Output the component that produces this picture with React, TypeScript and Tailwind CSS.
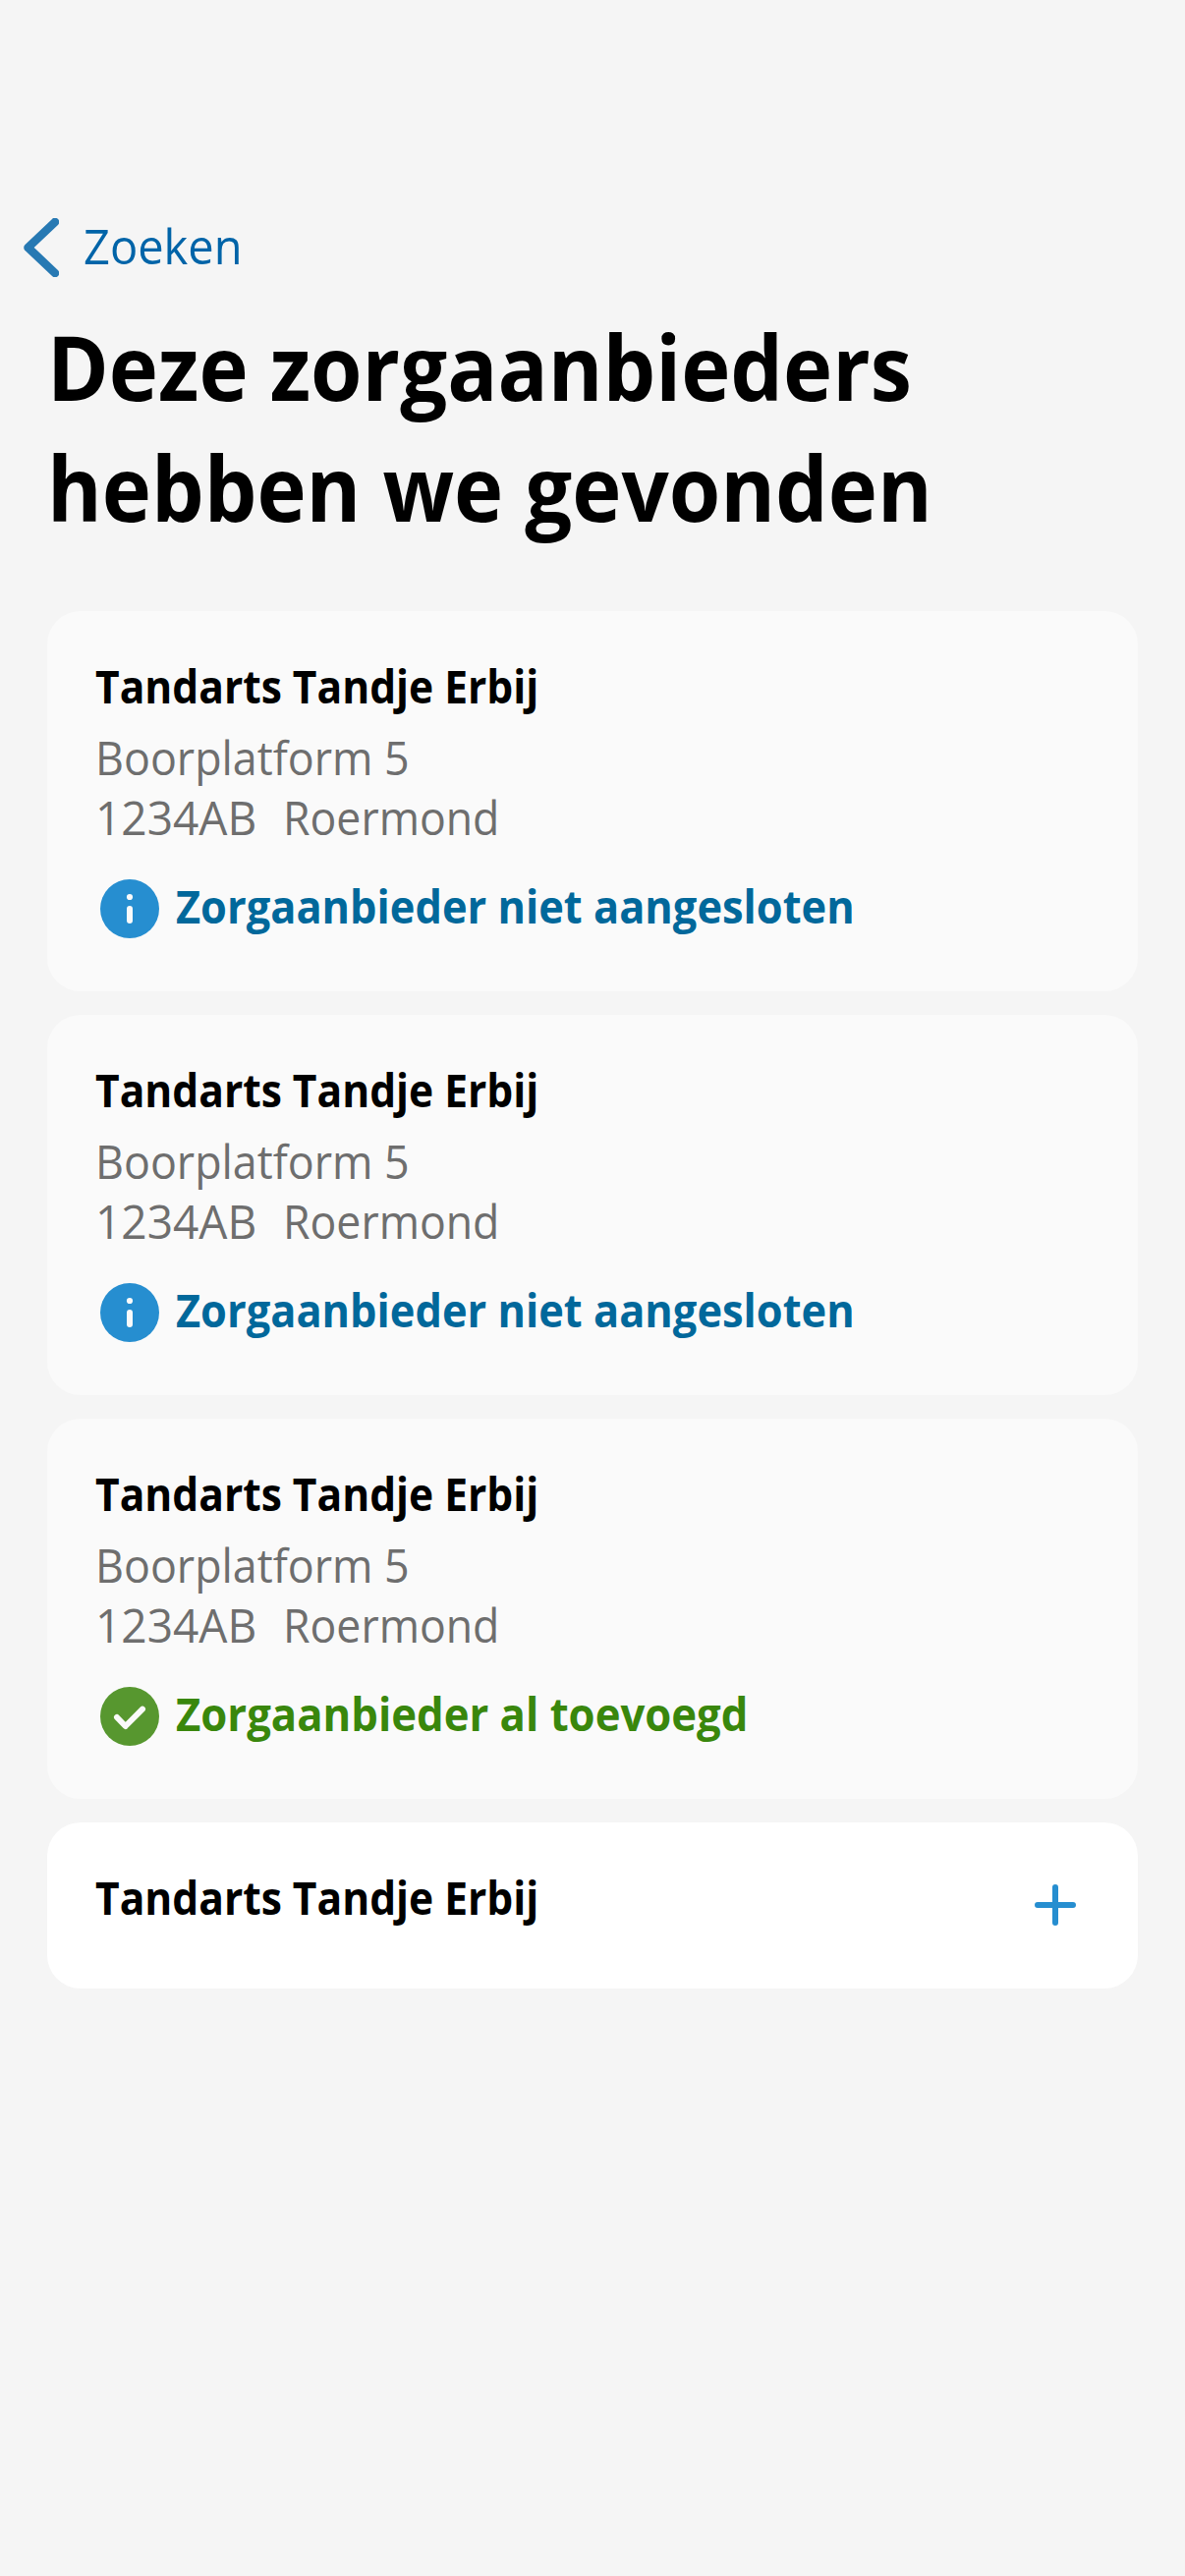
type Status = "unavailable" | "added";

const InfoIcon = () => (
  <svg viewBox="0 0 60 60" className="size-[60px] shrink-0">
    <circle cx="30" cy="30" r="30" fill="#268ed0" />
    <circle cx="30" cy="18" r="3.1" fill="#fafafa" />
    <rect x="27" y="27" width="6" height="18" rx="3" fill="#fafafa" />
  </svg>
);

const CheckIcon = () => (
  <svg viewBox="0 0 60 60" className="size-[60px] shrink-0">
    <circle cx="30" cy="30" r="30" fill="#57972f" />
    <path d="M17 31 L25.7 40 L43 22.7" fill="none" stroke="#fafafa" strokeWidth="6" strokeLinecap="round" strokeLinejoin="round" />
  </svg>
);

const Name = () => (
  <h2 className="w-max origin-left scale-x-[0.905] text-[47px] leading-[60px] font-bold text-black">
    Tandarts Tandje Erbij
  </h2>
);

function ProviderCard({ status }: { status: Status }) {
  return (
    <article className="h-[387px] rounded-[34px] bg-[#fafafa] pt-[46px] pl-[49px]">
      <Name />
      <div className="mt-[13px] text-[47px] leading-[61px] text-[#6e6e6e]">
        <p className="w-max origin-left scale-x-[0.953]">Boorplatform 5</p>
        <p className="flex gap-[23px]">
          <span className="origin-left scale-x-[0.98]">1234AB</span>
          <span className="origin-left scale-x-[0.949]">Roermond</span>
        </p>
      </div>
      <div className="mt-8 ml-[5px] flex items-center gap-[17px]">
        {status === "unavailable" ? <InfoIcon /> : <CheckIcon />}
        {status === "unavailable" ? (
          <p className="-mt-1.5 origin-left scale-x-[0.923] text-[47px] leading-[54px] font-bold whitespace-nowrap text-[#01689b]">
            Zorgaanbieder niet aangesloten
          </p>
        ) : (
          <p className="-mt-1.5 origin-left scale-x-[0.929] text-[47px] leading-[54px] font-bold whitespace-nowrap text-[#39870c]">
            Zorgaanbieder al toevoegd
          </p>
        )}
      </div>
    </article>
  );
}

export default function App() {
  return (
    <main className="min-h-[2622px] w-[1206px] bg-[#f5f5f5] pt-[200px] font-['Open_Sans',sans-serif]">
      <nav className="flex h-[100px] items-center pl-6">
        <svg viewBox="0 0 36 60" className="mt-1 h-[60px] w-9" fill="none">
          <path d="M32 4 L4.5 30 L32 56" stroke="#2779b3" strokeWidth="8.6" strokeLinecap="round" strokeLinejoin="round" />
        </svg>
        <a className="ml-[25px] origin-left scale-x-[0.94] text-[50px] leading-[100px] text-[#0064a8]">Zoeken</a>
      </nav>
      <h1 className="mt-3 ml-12 w-max text-[91px] leading-[123px] font-bold text-black">
        <span className="block w-max origin-left scale-x-[0.933]">Deze zorgaanbieders</span>
        <span className="block w-max origin-left scale-x-[0.933]">hebben we gevonden</span>
      </h1>
      <section className="mx-12 mt-16 flex flex-col gap-6">
        <ProviderCard status="unavailable" />
        <ProviderCard status="unavailable" />
        <ProviderCard status="added" />
        <article className="flex h-[169px] items-start justify-between rounded-[34px] bg-white pt-[46px] pr-[63px] pl-[49px]">
          <Name />
          <svg viewBox="0 0 42 42" className="mt-[17px] size-[42px]" stroke="#268ed0" strokeWidth="6" strokeLinecap="round">
            <path d="M21 3 V39 M3 21 H39" />
          </svg>
        </article>
      </section>
    </main>
  );
}
